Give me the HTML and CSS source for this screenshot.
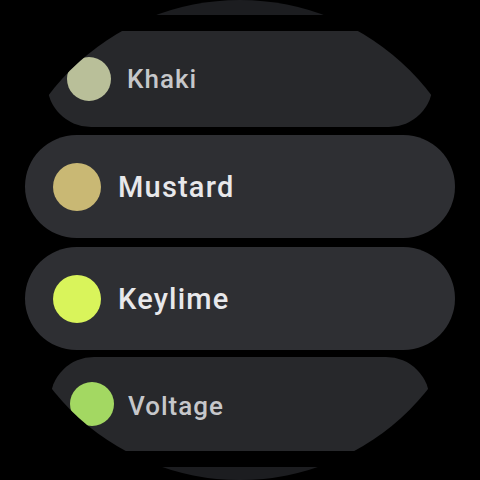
FILE: index.html
```html
<!DOCTYPE html>
<html lang="en">
<head>
    <meta charset="UTF-8">
    <meta name="viewport" content="width=device-width, initial-scale=1.0">
    <title>Colour Picker</title>
    <link rel="stylesheet" href="styles.css">
</head>
<body>
    <div class="watch-screen">
        <div class="color-list">
            <!-- Edge item, scrolled mostly out of view -->
            <div class="chip-row edge top-edge"></div>

            <div class="chip-row far">
                <span class="swatch khaki"></span>
                <span class="chip-label">Khaki</span>
            </div>

            <div class="chip-row near first-near">
                <span class="swatch mustard"></span>
                <span class="chip-label">Mustard</span>
            </div>

            <div class="chip-row near">
                <span class="swatch keylime"></span>
                <span class="chip-label">Keylime</span>
            </div>

            <div class="chip-row far last-far">
                <span class="swatch voltage"></span>
                <span class="chip-label">Voltage</span>
            </div>

            <div class="chip-row edge bottom-edge"></div>
        </div>
    </div>
</body>
</html>
```

FILE: styles.css
```css
* {
    box-sizing: border-box;
    margin: 0;
    padding: 0;
}

body {
    background-color: #000;
    font-family: Roboto, 'Noto Sans', sans-serif;
}

.watch-screen {
    width: 480px;
    height: 480px;
    border-radius: 50%;
    overflow: hidden;
    background-color: #000;
}

.color-list {
    display: flex;
    flex-direction: column;
    align-items: center;
}

.chip-row {
    display: flex;
    align-items: center;
    flex-shrink: 0;
    border-radius: 999px;
}

/* Full size rows in the middle of the list */
.chip-row.near {
    width: 430px;
    height: 103px;
    padding-left: 28px;
    gap: 17px;
    margin-top: 9px;
    background-color: #2e2f33;
    color: #e8e8eb;
    font-size: 29px;
    letter-spacing: 1.2px;
}

.chip-row.first-near {
    margin-top: 8px;
}

.chip-row.near .swatch {
    width: 48px;
    height: 48px;
}

.chip-row.near .chip-label {
    padding-top: 2px;
}

/* Rows shrinking towards the top and bottom edge */
.chip-row.far {
    width: 386px;
    height: 96px;
    padding-left: 20px;
    gap: 16px;
    margin-top: 16px;
    border-radius: 44px;
    background-color: #27282b;
    color: #c6c7ca;
    font-size: 26px;
    letter-spacing: 1px;
}

.chip-row.last-far {
    width: 380px;
    height: 94px;
    gap: 14px;
    margin-top: 7px;
}

.chip-row.last-far .chip-label {
    padding-top: 4px;
}

.chip-row.far .swatch {
    width: 44px;
    height: 44px;
}

.chip-row.edge {
    width: 340px;
    height: 80px;
    background-color: #1c1d20;
}

.top-edge {
    margin-top: -65px;
}

.bottom-edge {
    margin-top: 16px;
}

.swatch {
    flex-shrink: 0;
    border-radius: 50%;
}

.chip-label {
    font-weight: 500;
    padding-bottom: 1px;
}

.khaki {
    background-color: #b9bf99;
}

.mustard {
    background-color: #c9b874;
}

.keylime {
    background-color: #d9f45b;
}

.voltage {
    background-color: #a3d862;
}
```
